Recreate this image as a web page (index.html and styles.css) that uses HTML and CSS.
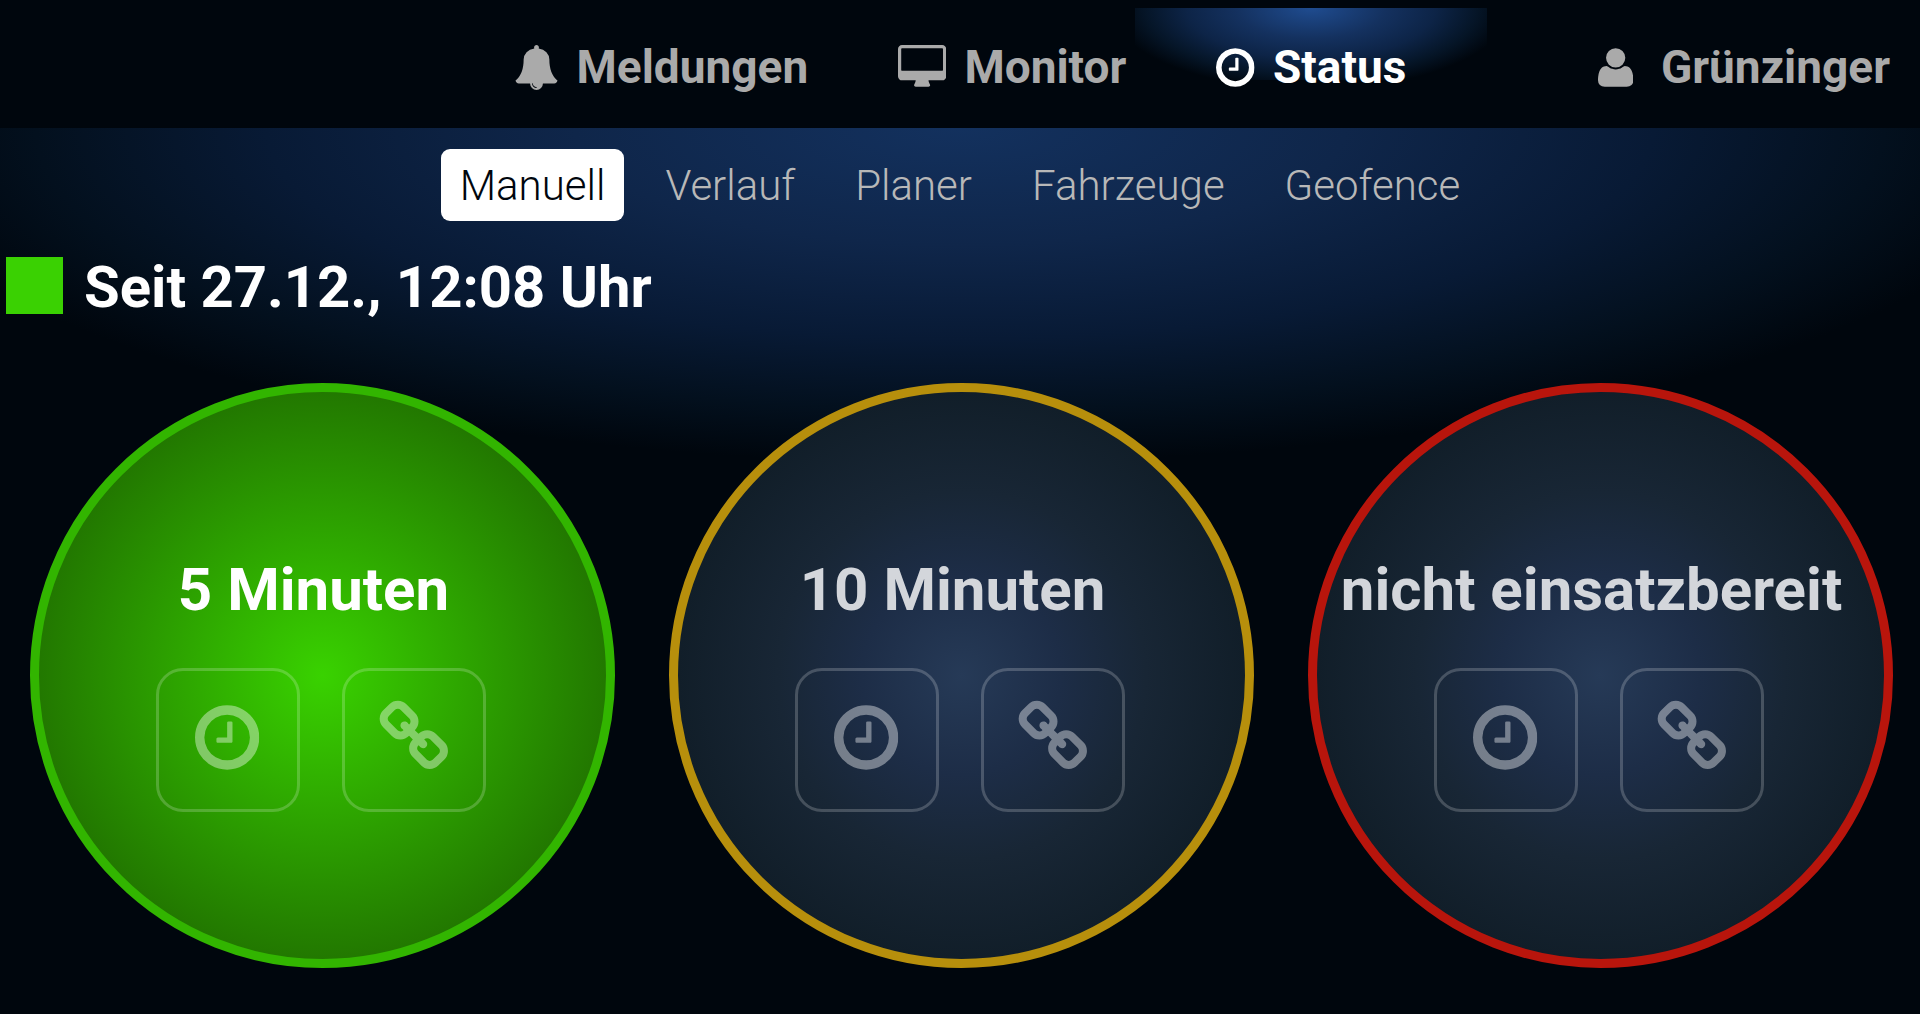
FILE: index.html
```
<!DOCTYPE html>
<html lang="de">
<head>
    <meta charset="UTF-8">
    <meta name="viewport" content="width=device-width, initial-scale=1.0">
    <title>Status</title>
    <link rel="stylesheet" href="styles.css">
</head>
<body>
    <!-- Shared icons -->
    <svg class="sprite" aria-hidden="true">
        <symbol id="icon-clock" viewBox="128 0 1536 1792">
            <path d="M1024 544v448q0 14-9 23t-23 9h-320q-14 0-23-9t-9-23v-64q0-14 9-23t23-9h224v-352q0-14 9-23t23-9h64q14 0 23 9t9 23zm416 352q0-148-73-273t-198-198-273-73-273 73-198 198-73 273 73 273 198 198 273 73 273-73 198-198 73-273zm224 0q0 209-103 385.5t-279.5 279.5-385.5 103-385.5-103-279.5-279.5-103-385.5 103-385.5 279.5-279.5 385.5-103 385.5 103 279.5 279.5 103 385.5z"/>
        </symbol>
        <symbol id="icon-link" viewBox="64 0 1664 1792">
            <path d="M1520 1216q0-40-28-68l-208-208q-28-28-68-28-42 0-72 32 3 3 19 18.500t21.500 21.500 15 19 13 25.500 3.500 27.500q0 40-28 68t-68 28q-15 0-27.500-3.500t-25.500-13-19-15-21.500-21.500-18.500-19q-33 31-33 73 0 40 28 68l206 207q27 27 68 27 40 0 68-26l147-146q28-28 28-67zm-703-705q0-40-28-68l-206-207q-28-28-68-28-39 0-68 27l-147 146q-28 28-28 67 0 40 28 68l208 208q27 27 68 27 42 0 72-31-3-3-19-18.500t-21.500-21.500-15-19-13-25.500-3.500-27.500q0-40 28-68t68-28q15 0 27.500 3.500t25.500 13 19 15 21.500 21.500 18.500 19q33-31 33-73zm895 705q0 120-85 203l-147 146q-83 83-203 83-121 0-204-85l-206-207q-83-83-83-203 0-123 88-209l-88-88q-86 88-208 88-120 0-204-84l-208-208q-84-84-84-204t85-203l147-146q83-83 203-83 121 0 204 85l206 207q83 83 83 203 0 123-88 209l88 88q86-88 208-88 120 0 204 84l208 208q84 84 84 204z"/>
        </symbol>
    </svg>

    <header class="topbar">
        <nav class="main-nav">
            <a href="#meldungen">
                <svg class="icon" viewBox="0 0 1792 1792" aria-hidden="true"><path d="M912 1696q0-16-16-16-59 0-101.500-42.500t-42.500-101.500q0-16-16-16t-16 16q0 73 51.500 124.500t124.500 51.500q16 0 16-16zm816-288q0 52-38 90t-90 38h-448q0 106-75 181t-181 75-181-75-75-181h-448q-52 0-90-38t-38-90q50-42 91-88t85-119.500 74.500-158.500 50-206 19.500-260q0-152 117-282.500t307-158.500q-8-19-8-39 0-40 28-68t68-28 68 28 28 68q0 20-8 39 190 28 307 158.500t117 282.500q0 139 19.500 260t50 206 74.500 158.500 85 119.500 91 88z"/></svg>
                Meldungen
            </a>
            <a href="#monitor">
                <svg class="icon" viewBox="-64 0 1920 1792" aria-hidden="true"><path d="M1728 992v-832q0-13-9.500-22.500t-22.500-9.500h-1600q-13 0-22.500 9.500t-9.500 22.500v832q0 13 9.500 22.500t22.500 9.500h1600q13 0 22.500-9.500t9.500-22.500zm128-832v1088q0 66-47 113t-113 47h-544q0 37 16 77.500t32 71 16 43.500q0 26-19 45t-45 19h-512q-26 0-45-19t-19-45q0-14 16-44t32-70 16-78h-544q-66 0-113-47t-47-113v-1088q0-66 47-113t113-47h1600q66 0 113 47t47 113z"/></svg>
                Monitor
            </a>
            <a href="#status" class="active">
                <svg class="icon" viewBox="128 0 1536 1792" aria-hidden="true"><use href="#icon-clock" x="128" width="1536" height="1792"/></svg>
                Status
            </a>
        </nav>
        <a href="#profil" class="user">
            <svg class="icon" viewBox="0 -1536 1408 1792" aria-hidden="true"><path transform="scale(1 -1)" d="M1408 131q0-120-73-189.500t-194-69.500h-874q-121 0-194 69.500t-73 189.500q0 53 3.500 103.500t14 109t26.500 108.500t43 97.500t62 81t85.500 53.500t111.500 20q9 0 42-21.500t74.500-48t108-48t133.500-21.500t133.500 21.500t108 48t74.500 48t42 21.500q61 0 111.500-20t85.500-53.500t62-81t43-97.500t26.500-108.500t14-109t3.500-103.500zM1088 1024q0-159-112.500-271.500t-271.500-112.500t-271.500 112.500t-112.500 271.500t112.500 271.500t271.500 112.500t271.500-112.500t112.500-271.500z"/></svg>
            Grünzinger
        </a>
    </header>

    <nav class="sub-nav">
        <a href="#manuell" class="active">Manuell</a>
        <a href="#verlauf">Verlauf</a>
        <a href="#planer">Planer</a>
        <a href="#fahrzeuge">Fahrzeuge</a>
        <a href="#geofence">Geofence</a>
    </nav>

    <main>
        <div class="since">
            <span class="since-color"></span>
            <h1>Seit 27.12., 12:08 Uhr</h1>
        </div>

        <div class="states">
            <section class="state state-green selected">
                <h2>5 Minuten</h2>
                <div class="actions">
                    <button type="button" aria-label="Zeit"><svg viewBox="0 0 1536 1792"><use href="#icon-clock" width="1536" height="1792"/></svg></button>
                    <button type="button" aria-label="Link"><svg viewBox="0 0 1664 1792"><use href="#icon-link" width="1664" height="1792"/></svg></button>
                </div>
            </section>
            <section class="state state-yellow">
                <h2>10 Minuten</h2>
                <div class="actions">
                    <button type="button" aria-label="Zeit"><svg viewBox="0 0 1536 1792"><use href="#icon-clock" width="1536" height="1792"/></svg></button>
                    <button type="button" aria-label="Link"><svg viewBox="0 0 1664 1792"><use href="#icon-link" width="1664" height="1792"/></svg></button>
                </div>
            </section>
            <section class="state state-red">
                <h2>nicht einsatzbereit</h2>
                <div class="actions">
                    <button type="button" aria-label="Zeit"><svg viewBox="0 0 1536 1792"><use href="#icon-clock" width="1536" height="1792"/></svg></button>
                    <button type="button" aria-label="Link"><svg viewBox="0 0 1664 1792"><use href="#icon-link" width="1664" height="1792"/></svg></button>
                </div>
            </section>
        </div>
    </main>
</body>
</html>
```
FILE: styles.css
```
* {
    box-sizing: border-box;
}

body {
    margin: 0;
    min-height: 100vh;
    font-family: Roboto, sans-serif;
    color: #fff;
    background: #00060d radial-gradient(ellipse 1100px 335px at 50% 128px, #13315e 0%, #0f264a 35%, #081a35 63%, #03101e 84%, #00060d 100%) no-repeat;
}

a {
    color: inherit;
    text-decoration: none;
}

h1,
h2 {
    margin: 0;
    font-weight: 700;
}

.sprite {
    display: none;
}

/* Top bar */
.topbar {
    display: grid;
    grid-template-columns: 1fr auto 1fr;
    height: 128px;
    padding-top: 8px;
    background: #00060d;
    color: #aaa;
    font-size: 46px;
    font-weight: 700;
    line-height: 54px;
}

.main-nav {
    grid-column: 2;
    display: flex;
}

.topbar a {
    position: relative;
    display: flex;
    align-items: center;
    gap: 18px;
    height: 118px;
    padding: 0 45px;
}

.topbar .icon {
    height: 45px;
    fill: currentColor;
}

.main-nav .active {
    isolation: isolate;
    color: #fff;
}

/* Glow behind the current entry */
.main-nav .active::before {
    content: "";
    position: absolute;
    z-index: -1;
    top: 0;
    left: -36px;
    right: -36px;
    height: 72px;
    background: radial-gradient(ellipse at 50% 0, #1f4c90 0%, #14315f 30%, #0d2447 50%, #051527 67%, #00060d 80%);
}

.topbar .user {
    justify-self: end;
    gap: 28px;
    padding: 0 30px;
}

/* Sub navigation */
.sub-nav {
    display: flex;
    justify-content: center;
    gap: 22px;
    padding: 21px 0;
    color: #b8b8b8;
    font-size: 42px;
    font-weight: 300;
    line-height: 70px;
}

.sub-nav a {
    padding: 2px 19px 0;
    border-radius: 9px;
}

.sub-nav .active {
    background: #fff;
    color: #00060d;
}

/* Current status */
.since {
    display: flex;
    align-items: center;
    gap: 21px;
    padding: 15px 6px;
}

.since-color {
    width: 57px;
    height: 57px;
    background: #3ad102;
}

.since h1 {
    padding-top: 4px;
    font-size: 58px;
    line-height: 53px;
}

/* Status circles */
.states {
    display: grid;
    grid-template-columns: repeat(3, 1fr);
    justify-items: center;
    padding: 54px 0 45px 3px;
}

.state {
    display: flex;
    flex-direction: column;
    align-items: center;
    width: 585px;
    aspect-ratio: 1;
    padding-top: 162px;
    border: 9px solid;
    border-radius: 50%;
    background: radial-gradient(circle closest-side, #263a57 0%, #1d2d47 35%, #182635 65%, #111e29 100%);
}

.state h2 {
    margin-right: 18px;
    color: #d3d6db;
    font-size: 60px;
    line-height: 72px;
    white-space: nowrap;
}

.state-green {
    border-color: #32b500;
}

.state-yellow {
    border-color: #b78f0c;
}

.state-red {
    border-color: #b8150c;
}

.state.selected {
    background: radial-gradient(circle closest-side, #39d200 0%, #227800 100%);
}

.selected h2 {
    color: #fff;
}

.actions {
    display: flex;
    gap: 42px;
    margin-top: 42px;
    margin-right: 4px;
}

.actions button {
    display: flex;
    justify-content: center;
    width: 144px;
    height: 144px;
    padding: 29px 0 0;
    border: 3px solid rgba(255, 255, 255, 0.2);
    border-radius: 27px;
    background: none;
    color: rgba(255, 255, 255, 0.4);
    cursor: pointer;
}

.actions svg {
    height: 75px;
    fill: currentColor;
}
```
